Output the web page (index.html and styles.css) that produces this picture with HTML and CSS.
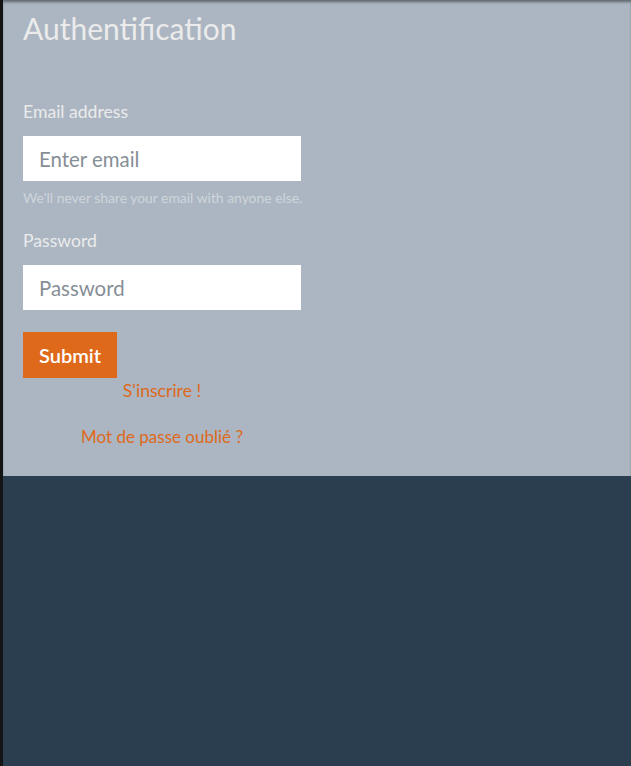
FILE: index.html
```html
<!DOCTYPE html>
<html>
<head>
<meta charset="utf-8">
<link rel="stylesheet" href="styles.css">
</head>
<body>
<div class="edge"></div>
<main class="page">
  <section class="panel">
    <h1 class="title">Authentification</h1>
    <form class="form">
      <div class="group">
        <label class="label">Email address</label>
        <input class="input" type="email" placeholder="Enter email">
        <small class="help">We'll never share your email with anyone else.</small>
      </div>
      <div class="group">
        <label class="label">Password</label>
        <input class="input" type="password" placeholder="Password">
      </div>
      <button class="btn" type="button">Submit</button>
      <div class="links">
        <a class="link" href="#">S'inscrire !</a>
        <a class="link link-second" href="#">Mot de passe oublié ?</a>
      </div>
    </form>
  </section>
</main>
</body>
</html>
```
FILE: styles.css
```css
html, body {
  margin: 0;
  padding: 0;
  height: 100%;
}
body {
  background: #2b3e50;
  font-family: Lato, "Noto Sans", sans-serif;
  display: flex;
}
.edge {
  width: 3px;
  background: #141414;
  flex: none;
}
.page {
  flex: 1;
  display: flex;
  flex-direction: column;
}
.panel {
  background: #abb6c2;
  height: 476px;
  box-sizing: border-box;
  padding: 0 20px;
  box-shadow: inset 0 3px 3px -1px rgba(0,0,0,0.45);
}
.title {
  margin: 0;
  padding-top: 10px;
  font-size: 30px;
  font-weight: 400;
  line-height: 36px;
  color: #ebebeb;
}
.form {
  width: 278px;
  margin-top: 52px;
}
.group {
  display: flex;
  flex-direction: column;
  margin-bottom: 19px;
}
.label {
  font-size: 17.6px;
  color: #ebebeb;
  line-height: 27px;
  margin-bottom: 11px;
}
.input {
  height: 45px;
  box-sizing: border-box;
  border: 0;
  border-radius: 0;
  padding: 0 16px;
  font-family: inherit;
  font-size: 20.4px;
  color: #4e5d6c;
  background: #fff;
  outline: none;
}
.input::placeholder {
  color: #868e96;
}
.help {
  margin-top: 6px;
  font-size: 13.9px;
  line-height: 21px;
  color: #cfd5dc;
  white-space: nowrap;
}
.btn {
  display: block;
  background: #df691a;
  color: #fff;
  border: 0;
  border-radius: 0;
  height: 46px;
  padding: 0 16px;
  font-family: inherit;
  font-size: 20px;
  font-weight: 600;
  margin-top: 22px;
}
.links {
  display: flex;
  flex-direction: column;
  align-items: center;
}
.link {
  color: #df691a;
  text-decoration: none;
  font-size: 17.6px;
  line-height: 26px;
}
.link-second {
  margin-top: 20px;
  font-size: 17px;
}
```
